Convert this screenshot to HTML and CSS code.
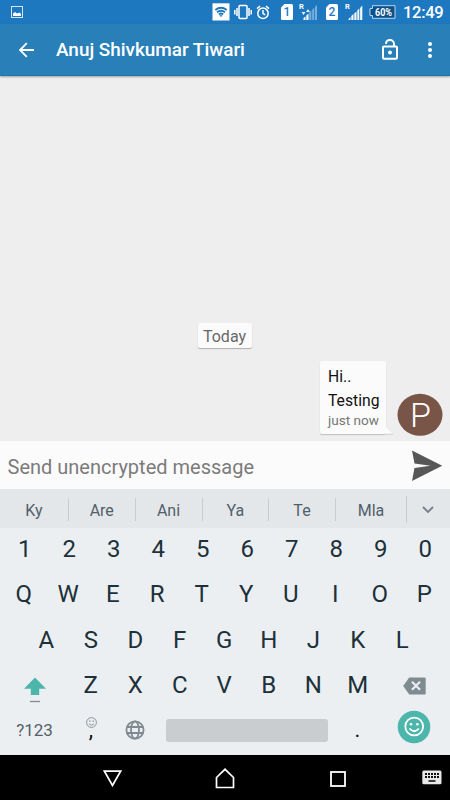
FILE: index.html
```html
<!DOCTYPE html>
<html lang="en">
<head>
<meta charset="utf-8">
<title>Messages</title>
<link rel="stylesheet" href="styles.css">
</head>
<body>
<div class="phone">
  <div class="status">
    <svg class="pic" width="12" height="12" viewBox="0 0 12 12"><rect x=".5" y=".5" width="11" height="11" fill="none" stroke="#d5e6f4"/><path d="M2 10V7.500L4 6l2 1.500L8.500 6.500 10 8v2z" fill="#fff"/></svg>
    <svg class="wifi" width="18" height="18" viewBox="0 0 18 18"><path d="M.5.3h17v17.200H.5z" fill="#fff"/><g fill="none" stroke="#1e77b8" stroke-width="1.800"><path d="M3.300 7q5.700-4.500 11.400 0M5 9.300q4-3.200 8 0M6.800 11.400q2.200-1.800 4.400 0"/></g><path d="M7.300 12.200h3.400L9 14z" fill="#1e77b8"/></svg>
    <svg class="vib" width="18" height="16" viewBox="0 0 18 16"><g fill="none" stroke="#fff" stroke-width="1.500"><rect x="5" y="1.600" width="8" height="12.800" rx="1"/><path d="M3 4v8M15 4v8M.8 6v4.500M17.200 6v4.500"/></g></svg>
    <svg class="alarm" width="14" height="15" viewBox="0 0 14 15"><g fill="none" stroke="#fff" stroke-width="1.500"><circle cx="7" cy="8.300" r="5.200"/><path d="M1 3.600 4 1.200M13 3.600 10 1.200M7 5v3.500l2.300 1.300"/></g></svg>
    <svg class="sim" width="12" height="16" viewBox="0 0 12 16"><path d="M3.500 0H10.500Q12 0 12 1.500v13q0 1.500-1.500 1.500h-9Q0 16 0 14.500V3.500z" fill="#fff"/><text x="6" y="12.300" text-anchor="middle" class="sim-no">1</text></svg>
    <svg class="sig" width="19" height="18" viewBox="0 0 19 18"><text x="0" y="6" class="roam">R</text><path d="M2.500 9h4L4.500 12zM7 9h4L9 6z" fill="#e4f0fa"/><path d="M4.500 17v-2l2-1.500V17zM7.300 17v-4.500l2.200-2V17z" fill="#fff"/><path d="M10.300 17V9.500l2-2V17zM13.200 17V6.700l2-2V17zM16 17V4l2-2v15z" fill="#78afdc"/></svg>
    <svg class="sim2" width="12" height="16" viewBox="0 0 12 16"><path d="M3.500 0H10.500Q12 0 12 1.500v13q0 1.500-1.500 1.500h-9Q0 16 0 14.500V3.500z" fill="#fff"/><text x="6" y="12.300" text-anchor="middle" class="sim-no">2</text></svg>
    <svg class="sig2" width="18" height="18" viewBox="0 0 18 18"><text x="0" y="6" class="roam">R</text><path d="M3.500 17v-1l2-2v3zM6.300 17v-4l2.200-2v6zM9.300 17v-6.500l2.200-2V17zM12.300 17V7.500l2-2V17zM15.100 17V5l2.200-2.500V17z" fill="#f4f9fd"/></svg>
    <svg class="batt" width="27" height="14" viewBox="0 0 27 14"><path d="M3.500.7H26v12.600H3.500V10.500H1v-7h2.500z" fill="#0f4f87" stroke="#bad6ed"/><text x="14.500" y="10.700" text-anchor="middle" class="pct" textLength="17" lengthAdjust="spacingAndGlyphs">60%</text></svg>
    <span class="time">12:49</span>
  </div>
  <header class="bar">
    <svg class="back" width="16" height="16" viewBox="0 0 16 16"><path d="M15 8H1.500M7.800 1.200 1 8l6.800 6.800" fill="none" stroke="#fff" stroke-width="1.900"/></svg>
    <h1>Anuj Shivkumar Tiwari</h1>
    <svg class="lock" width="16" height="21" viewBox="0 0 16 21"><rect x="1" y="7.500" width="14" height="12.300" rx="1" fill="none" stroke="#fff" stroke-width="2"/><path d="M4 4.900C4 2.300 5.700 1 8 1s4 1.500 4 4v2.500" fill="none" stroke="#fff" stroke-width="1.900"/><circle cx="8" cy="13.600" r="2" fill="#fff"/></svg>
    <svg class="more" width="6" height="16" viewBox="0 0 6 16"><g fill="#fff"><circle cx="3" cy="2.100" r="2"/><circle cx="3" cy="8" r="2"/><circle cx="3" cy="13.900" r="2"/></g></svg>
  </header>
  <main class="chat">
    <div class="day"><span>Today</span></div>
    <div class="row">
      <div class="bubble">
        <p>Hi..</p>
        <p>Testing</p>
        <p class="when">just now</p>
        <svg class="tail" width="9" height="11" viewBox="0 0 9 11"><path d="M0 2.500 8 10H0z" fill="#fbfbfb"/><path d="M0 10.200H8" stroke="#cfcfcf"/></svg>
      </div>
      <svg class="avatar" width="46" height="43" viewBox="0 0 46 43"><ellipse cx="23" cy="21.800" rx="22.500" ry="21" fill="#795548"/><text x="23.500" y="33.500" text-anchor="middle" class="initial">P</text></svg>
    </div>
  </main>
  <div class="compose">
    <span>Send unencrypted message</span>
    <svg width="31" height="32" viewBox="0 0 31 32"><path d="M0 .500 30.200 15.800 0 31 2.500 18 18.500 15.800 2.500 13.600z" fill="#575757"/></svg>
  </div>
  <section class="keyboard">
    <div class="suggest">
      <span>Ky</span><span>Are</span><span>Ani</span><span>Ya</span><span>Te</span><span>Mla</span>
      <div class="expand"><svg width="12" height="8" viewBox="0 0 12 8"><path d="m1 1 5 5 5-5" fill="none" stroke="#738087" stroke-width="1.900"/></svg></div>
    </div>
    <div class="keys digits"><b>1</b><b>2</b><b>3</b><b>4</b><b>5</b><b>6</b><b>7</b><b>8</b><b>9</b><b>0</b></div>
    <div class="keys top"><b>Q</b><b>W</b><b>E</b><b>R</b><b>T</b><b>Y</b><b>U</b><b>I</b><b>O</b><b>P</b></div>
    <div class="keys home"><b>A</b><b>S</b><b>D</b><b>F</b><b>G</b><b>H</b><b>J</b><b>K</b><b>L</b></div>
    <div class="keys low">
      <svg class="shift" width="22" height="26" viewBox="0 0 22 26"><path d="M11 .6 22 11.800H15.200V18H6.800v-6.200H0z" fill="#4db6ac"/><path d="M6 24.500h10" stroke="#7f8c91" stroke-width="1.300"/></svg>
      <b>Z</b><b>X</b><b>C</b><b>V</b><b>B</b><b>N</b><b>M</b>
      <svg class="del" width="23" height="18" viewBox="0 0 23 18"><path d="M6.200.5H21.500Q22.700.5 22.700 1.700v14.500q0 1.200-1.200 1.200H6.200L.2 9z" fill="#7f8b90"/><path d="m9 4.800 8 8m0-8-8 8" stroke="#eceff1" stroke-width="2.200"/></svg>
    </div>
    <div class="keys last">
      <span class="sym">?123</span>
      <div class="comma"><svg width="11" height="11" viewBox="0 0 11 11"><g fill="none" stroke="#7f8b90" stroke-width=".9"><circle cx="5.500" cy="5.500" r="4.900"/><path d="M3 6.800q2.500 2.800 5 0"/></g><path d="M3.200 3.500h1.300v1.300H3.200zM6.500 3.500h1.300v1.300H6.500z" fill="#7f8b90"/></svg><i>,</i></div>
      <svg class="globe" width="20" height="20" viewBox="0 0 20 20"><g fill="none" stroke="#7f8b90" stroke-width="1.800"><circle cx="10" cy="10" r="8.600"/><ellipse cx="10" cy="10" rx="4" ry="8.600"/><path d="M1.700 7h16.600M1.700 13h16.600"/></g></svg>
      <div class="space"></div>
      <span class="dot">.</span>
      <svg class="emoji" width="34" height="34" viewBox="0 0 34 34"><circle cx="17" cy="17" r="16.300" fill="#4db6ac"/><g fill="none" stroke="#fff" stroke-width="1.800"><circle cx="17.200" cy="16.500" r="8.900"/><path d="M12.500 18.500q4.700 5.500 9.400 0"/></g><circle cx="14" cy="14.300" r="1.300" fill="#fff"/><circle cx="20.400" cy="14.300" r="1.300" fill="#fff"/></svg>
    </div>
  </section>
  <nav class="nav">
    <svg width="19" height="17" viewBox="0 0 19 17"><path d="M1.400 1.200h16.200L9.500 15.500z" fill="none" stroke="#fff" stroke-width="1.700"/></svg>
    <svg width="20" height="21" viewBox="0 0 20 21"><path d="M1.500 19.500v-10L10 1.300l8.500 8.200v10z" fill="none" stroke="#fff" stroke-width="1.700"/></svg>
    <svg width="16" height="16" viewBox="0 0 16 16"><rect x="1" y="1" width="14" height="14" fill="none" stroke="#fff" stroke-width="1.800"/></svg>
    <svg width="20" height="15" viewBox="0 0 20 15"><rect x=".3" y=".5" width="19.200" height="13.700" rx="1.500" fill="#e8e8e8"/><path d="M3 4h14M3 7h14" stroke="#111" stroke-width="1.900" stroke-dasharray="2 1"/><path d="M6.500 11h7" stroke="#111" stroke-width="1.600"/></svg>
  </nav>
</div>
</body>
</html>
```
FILE: styles.css
```css
* { box-sizing: border-box; }
body { margin: 0; font-family: Roboto, sans-serif; }
svg { display: block; flex: none; }
h1, p { margin: 0; }
.phone { width: 450px; height: 800px; display: flex; flex-direction: column; overflow: hidden; }

.status { height: 24px; flex: none; background: #1e78c0; display: flex; align-items: center; white-space: nowrap; }
.pic { margin-left: 11px; }
.wifi { margin-left: 189px; }
.vib { margin-left: 3.500px; }
.alarm { margin-left: 4.500px; }
.sim { margin-left: 11px; }
.sig { margin-left: 6px; margin-bottom: 1px; }
.sim2 { margin-left: 8px; }
.sig2 { margin-left: 7px; margin-bottom: 1px; }
.batt { margin-left: 6px; }
.time { margin-left: 7px; padding-top: 1px; font-size: 16.500px; font-weight: 500; color: #fff; line-height: 24px; letter-spacing: -.3px; }
.sim-no { font-size: 12px; font-weight: 500; fill: #1e78c0; }
.roam { font-size: 7.500px; font-weight: 700; fill: #fff; }
.pct { font-size: 10.500px; font-weight: 700; fill: #fff; }

.bar { height: 52px; flex: none; background: #2980b9; border-bottom: 1px solid #1c75b5; display: flex; align-items: center; box-shadow: 0 1px 2px #0005; position: relative; }
.back { margin-left: 19px; }
h1 { margin-left: 21px; padding-top: 1px; width: 326px; font-size: 18.900px; font-weight: 500; color: #fff; line-height: 24px; white-space: nowrap; }
.lock { margin-bottom: 1px; }
.more { margin-left: 28.500px; }

.chat { flex: 1; background: #eee; display: flex; flex-direction: column; justify-content: flex-end; padding-bottom: 6px; }
.day { display: flex; justify-content: center; margin-bottom: 13px; }
.day span { width: 54px; height: 25px; margin-right: 1px; background: #fbfbfb; border-radius: 2px; box-shadow: 0 1px 1px #0004; font-size: 16px; line-height: 27px; color: #686868; text-align: center; }
.row { display: flex; justify-content: flex-end; align-items: flex-end; padding-right: 7px; }
.bubble { position: relative; width: 66px; height: 73px; margin-right: 11px; margin-bottom: 1px; padding: 4px 0 0 8px; background: #fbfbfb; border-radius: 2px; box-shadow: 0 1px 1px #0003; font-size: 15.700px; line-height: 24px; color: #111; white-space: nowrap; }
.when { font-size: 13.600px; line-height: 15px; color: #777; }
.tail { position: absolute; left: 65px; bottom: -1px; }
.avatar { margin-bottom: -1px; }
.initial { font-size: 34px; font-weight: 300; fill: #fff; }

.compose { height: 48px; flex: none; background: #fbfbfb; display: flex; align-items: center; justify-content: space-between; padding: 2px 7px 0 7.500px; font-size: 20px; color: #7b7b7b; }
.compose span { padding-top: 1px; }

.keyboard { flex: none; height: 266px; background: #eceff1; color: #263238; }
.suggest { height: 39px; background: #e4e7e9; display: grid; grid-template-columns: 69px 66.500px 67px 66.500px 67px 71px 43px; align-items: center; font-size: 16px; color: #50606a; }
.suggest span { height: 23px; line-height: 25px; text-align: center; border-right: 1px solid #c8cdcf; margin-top: 2px; }
.suggest span:nth-child(6) { height: 27px; line-height: 29px; }
.expand { display: flex; justify-content: center; padding: 2px 2px 0 0; }
.keys { display: flex; align-items: center; }
.keys b { font-weight: 400; font-size: 24px; line-height: 30px; width: 44.500px; text-align: center; color: #1c313a; }
.digits { height: 42px; padding-left: 2.500px; }
.top { height: 47px; padding-left: 1.500px; }
.home { height: 45px; padding-left: 24px; }
.low { height: 46px; padding-left: 24px; }
.shift { margin: 9px 22.500px 0 0; }
.del { margin-left: 23px; margin-top: 2px; }
.last { height: 47px; }
.sym { width: 53px; margin: 0 0 3px 8px; font-size: 17px; text-align: center; color: #50606a; }
.comma { width: 12px; height: 35px; margin-left: 24px; display: flex; flex-direction: column; align-items: center; }
.comma svg { margin-top: 3px; }
.comma i { font-style: normal; font-size: 22px; line-height: 12px; color: #111; margin-top: -4px; }
.globe { margin: 0 0 3px 28px; }
.space { width: 162px; height: 23px; margin: 0 0 3px 20.500px; background: #c9cdcf; border-radius: 3px; }
.dot { width: 20px; margin: 0 0 4px 20px; text-align: center; font-size: 22px; line-height: 24px; color: #111; }
.emoji { margin: 0 0 9px 29px; }

.nav { height: 45px; flex: none; background: #000; display: grid; grid-template-columns: repeat(4, 112.500px); align-items: center; padding-top: 2px; }
.nav svg:nth-child(1) { margin-left: 103px; }
.nav svg:nth-child(2) { margin-left: 102.500px; }
.nav svg:nth-child(3) { margin-left: 105px; margin-top: 1px; }
.nav svg:nth-child(4) { margin-left: 84px; margin-bottom: 2px; }
```
